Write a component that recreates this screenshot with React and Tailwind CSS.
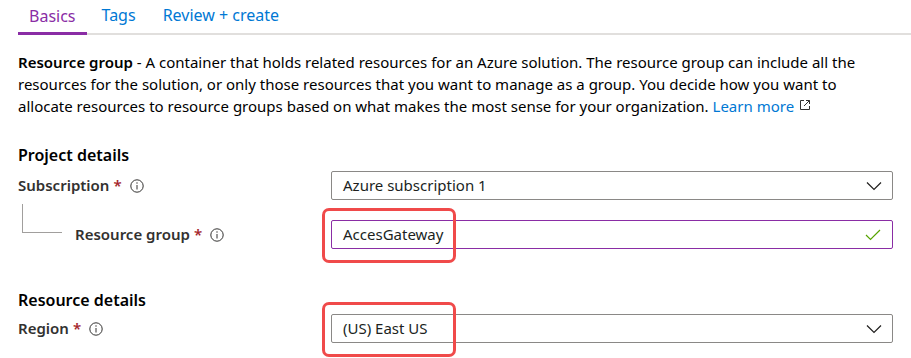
import React from 'react';

const font = { fontFamily: '"Noto Sans", "Open Sans", sans-serif' };

function InfoIcon() {
  return (
    <svg width="14" height="14" viewBox="0 0 14 14" className="inline-block">
      <circle cx="7" cy="7" r="6.2" fill="none" stroke="#323130" strokeWidth="1" />
      <line x1="7" y1="6" x2="7" y2="10.5" stroke="#323130" strokeWidth="1" />
      <circle cx="7" cy="4" r="0.7" fill="#323130" />
    </svg>
  );
}

function Chevron() {
  return (
    <svg width="16" height="10" viewBox="0 0 16 10">
      <polyline points="1,1.5 8,8.5 15,1.5" fill="none" stroke="#201f1e" strokeWidth="1.2" />
    </svg>
  );
}

function Check() {
  return (
    <svg width="16" height="12" viewBox="0 0 16 12">
      <polyline points="1,6 5.5,10.5 15,1" fill="none" stroke="#57a300" strokeWidth="1.2" />
    </svg>
  );
}

function Label({ text, indent }) {
  return (
    <div className={`flex items-center gap-[6px] text-[15px] font-semibold text-[#323130] ${indent ? 'pl-[57px]' : ''}`}>
      <span>{text}</span>
      <span className="text-[#a4262c] -ml-[2px]">*</span>
      <span className="ml-[2px] flex items-center"><InfoIcon /></span>
    </div>
  );
}

function Highlight() {
  return <div className="absolute -left-[10px] -top-[13px] w-[134px] h-[55px] border-[3px] border-[#f04a4a] rounded-[7px] pointer-events-none" />;
}

export default function App() {
  return (
    <div className="w-[911px] h-[358px] bg-white overflow-hidden pl-[18px] pr-[18px]" style={font}>
      {/* Tabs */}
      <div className="flex border-b-2 border-[#e1dfdd] -mr-[18px] h-[35px] items-end">
        <div className="px-[11px] pb-[4px] text-[16px] text-[#8a2da5] border-b-[3px] border-[#8a2da5] -mb-[2px]">Basics</div>
        <div className="px-[15px] pb-[6px] text-[16px] text-[#0078d4]">Tags</div>
        <div className="px-[12px] pb-[6px] text-[16px] text-[#0078d4]">Review + create</div>
      </div>

      {/* Description */}
      <p className="mt-[16px] text-[15px] leading-[22px] text-[#000]">
        <span className="font-semibold">Resource group</span> - A container that holds related resources for an Azure solution. The resource group can include all the resources for the solution, or only those resources that you want to manage as a group. You decide how you want to allocate resources to resource groups based on what makes the most sense for your organization.{' '}
        <span className="text-[#0078d4]">Learn more</span>
        <svg width="12" height="12" viewBox="0 0 12 12" className="inline-block ml-[5px] -mt-[6px]">
          <path d="M5 1.5H1.5v9h9V7" fill="none" stroke="#323130" strokeWidth="1" />
          <path d="M7 1.5h3.5V5M10.5 1.5L5 7" fill="none" stroke="#323130" strokeWidth="1" />
        </svg>
      </p>

      {/* Project details */}
      <div className="mt-[27px] text-[16px] font-semibold text-[#000] leading-[22px]">Project details</div>
      <div className="grid grid-cols-[313px_562px] items-center mt-[5px]">
        <Label text="Subscription" />
        <div className="h-[29px] border border-[#8a8886] rounded-[2px] flex items-center justify-between pl-[11px] pr-[10px] text-[15px] text-[#201f1e]">
          <span>Azure subscription 1</span>
          <Chevron />
        </div>
      </div>
      <div className="grid grid-cols-[313px_562px] items-center mt-[20px]">
        <div className="relative h-[29px] flex items-center">
          <div className="absolute left-[4px] -top-[16px] w-[40px] h-[29px] border-l border-b border-[#a19f9d]" />
          <Label text="Resource group" indent />
        </div>
        <div className="relative h-[29px] border border-[#8a2da5] rounded-[2px] flex items-center justify-between pl-[11px] pr-[11px] text-[15px] text-[#201f1e]">
          <span>AccesGateway</span>
          <Check />
          <Highlight />
        </div>
      </div>

      {/* Resource details */}
      <div className="mt-[40px] text-[16px] font-semibold text-[#000] leading-[22px]">Resource details</div>
      <div className="grid grid-cols-[313px_562px] items-center mt-[3px]">
        <Label text="Region" />
        <div className="relative h-[29px] border border-[#8a8886] rounded-[2px] flex items-center justify-between pl-[11px] pr-[10px] text-[15px] text-[#201f1e]">
          <span>(US) East US</span>
          <Chevron />
          <Highlight />
        </div>
      </div>
    </div>
  );
}
